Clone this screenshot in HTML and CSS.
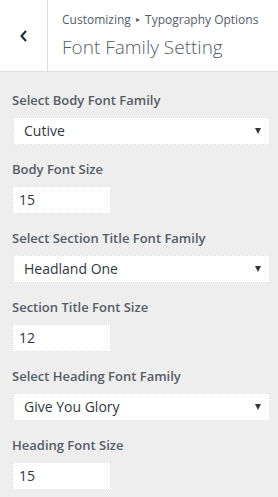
FILE: index.html
```html
<!DOCTYPE html>
<html lang="en">
  <head>
    <meta charset="UTF-8" />
    <meta name="viewport" content="width=device-width, initial-scale=1.0" />
    <title>Font Family Setting</title>
    <link rel="stylesheet" href="styles.css">
  </head>
  <body>
    <div class="header">
      <div class="back">
        <svg width="10" height="14" viewBox="0 0 10 14"><path d="M7 2 L2.5 7 L7 12" fill="none" stroke="#23282d" stroke-width="2"/></svg>
      </div>
      <div class="title">
        <div class="crumb">Customizing <span class="sep">&#9656;</span> Typography Options</div>
        <div class="heading">Font Family Setting</div>
      </div>
    </div>
    <div class="content">
      <div class="control">
        <div class="label">Select Body Font Family</div>
        <div class="select">Cutive<span class="arrow"></span></div>
      </div>
      <div class="control">
        <div class="label">Body Font Size</div>
        <div class="number">15</div>
      </div>
      <div class="control">
        <div class="label">Select Section Title Font Family</div>
        <div class="select">Headland One<span class="arrow"></span></div>
      </div>
      <div class="control">
        <div class="label">Section Title Font Size</div>
        <div class="number">12</div>
      </div>
      <div class="control">
        <div class="label">Select Heading Font Family</div>
        <div class="select">Give You Glory<span class="arrow"></span></div>
      </div>
      <div class="control">
        <div class="label">Heading Font Size</div>
        <div class="number">15</div>
      </div>
    </div>
  </body>
</html>
```

FILE: styles.css
```css
body {
  margin: 0;
  background: #eeeeee;
  font-family: "Open Sans", "Noto Sans", sans-serif;
  color: #555d66;
}
.header {
  display: flex;
  height: 71px;
  background: white;
  border-bottom: 1px solid #dddddd;
}
.back {
  width: 47px;
  border-right: 1px solid #dddddd;
  display: flex;
  align-items: center;
  justify-content: center;
}
.title {
  padding: 10px 0 0 14px;
}
.crumb {
  font-size: 12px;
  line-height: 18px;
  color: #555d66;
}
.sep {
  font-size: 8px;
  vertical-align: 2px;
  margin: 0 2px;
}
.heading {
  font-size: 19px;
  font-weight: 300;
  line-height: 28px;
  margin-top: 4px;
  color: #555d66;
}
.content {
  padding: 19px 8px 0 12px;
}
.control {
  margin-bottom: 15px;
}
.label {
  font-size: 13px;
  font-weight: 600;
  line-height: 18px;
  margin-bottom: 8px;
}
.select,
.number {
  background: white;
  border: 1px dotted #dddddd;
  box-sizing: border-box;
  height: 28px;
  font-size: 14px;
  line-height: 26px;
  color: #32373c;
}
.select {
  margin-left: 1px;
  padding-left: 10px;
  display: flex;
  justify-content: space-between;
  align-items: center;
}
.arrow {
  width: 0;
  height: 0;
  border-left: 3.5px solid transparent;
  border-right: 3.5px solid transparent;
  border-top: 6px solid #32373c;
  margin-right: 8px;
}
.number {
  width: 99px;
  padding-left: 6px;
}
```
